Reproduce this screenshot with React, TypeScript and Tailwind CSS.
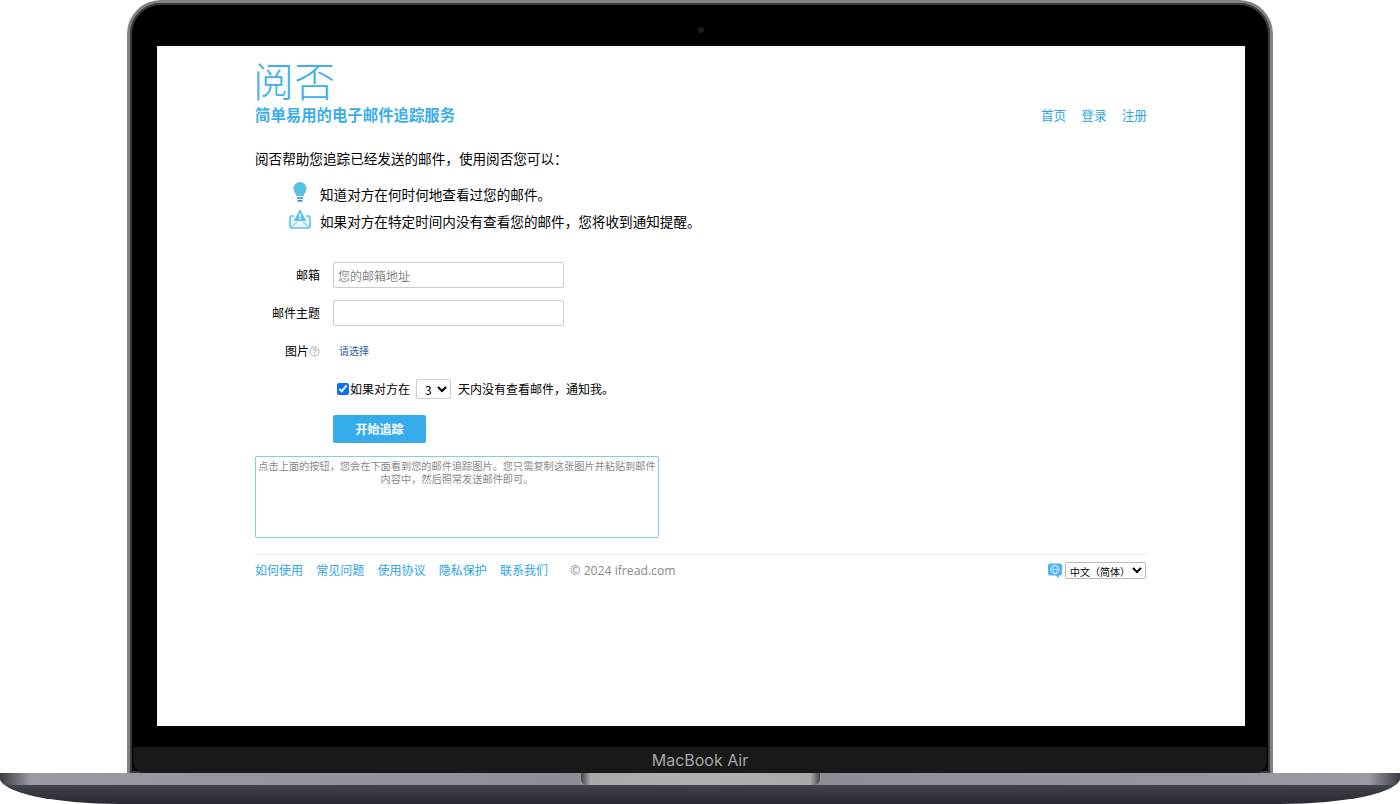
import React from 'react';

const BulbIcon = () => (
  <svg width="16" height="23" viewBox="0 0 16 22">
    <path d="M8 0.5a6.6 6.6 0 0 0-6.6 6.7c0 3 2.2 4.4 3.2 7.3h6.8c1-2.9 3.2-4.3 3.2-7.3A6.6 6.6 0 0 0 8 0.5z" fill="#5bc0e8" />
    <rect x="5" y="15.6" width="6" height="1.8" fill="#3aa5dc" />
    <rect x="5.6" y="18.4" width="4.8" height="1.8" fill="#2b8fd0" />
  </svg>
);

const MailAlertIcon = () => (
  <svg width="22" height="20" viewBox="0 0 22 20">
    <path d="M5 7H2.6A1.6 1.6 0 0 0 1 8.6v8.8A1.6 1.6 0 0 0 2.6 19h16.8a1.6 1.6 0 0 0 1.6-1.6V8.6A1.6 1.6 0 0 0 19.4 7H17" fill="#e8f6fd" stroke="#5bc0e8" strokeWidth="1.6" />
    <path d="M2 18l6-5M20 18l-6-5" stroke="#8fd6f2" strokeWidth="1.2" fill="none" />
    <path d="M11 1l5.5 10.5h-11z" fill="#5bc0e8" stroke="#5bc0e8" strokeLinejoin="round" />
    <rect x="10.2" y="4.6" width="1.6" height="3.6" fill="#fff" />
    <rect x="10.2" y="9" width="1.6" height="1.5" fill="#fff" />
  </svg>
);

const HelpIcon = () => (
  <svg width="11" height="11" viewBox="0 0 11 11">
    <circle cx="5.5" cy="5.5" r="4.7" fill="#f4f4f4" stroke="#b5b5b5" />
    <path d="M4 4.3c0-2 3.1-1.9 3.1-.1 0 1.2-1.6 1.2-1.6 2.5M5.5 7.6v1" fill="none" stroke="#a0a0a0" />
  </svg>
);

const LangIcon = () => (
  <svg width="16" height="17" viewBox="0 0 16 16">
    <path d="M3 1h10a2 2 0 0 1 2 2v8a2 2 0 0 1-2 2h-1l-.5 3-2.5-3H3a2 2 0 0 1-2-2V3a2 2 0 0 1 2-2z" fill="#4fb4f0" />
    <circle cx="8" cy="7" r="4.2" fill="none" stroke="#d5eefc" strokeWidth="0.9" />
    <ellipse cx="8" cy="7" rx="1.9" ry="4.2" fill="none" stroke="#d5eefc" strokeWidth="0.7" />
    <path d="M3.8 7h8.4" stroke="#d5eefc" strokeWidth="0.7" />
  </svg>
);

const footerLinks = ['如何使用', '常见问题', '使用协议', '隐私保护', '联系我们'];

const IfreadPage = () => (
  <div className="mx-auto w-[892px] text-black font-['Noto_Sans_CJK_SC',sans-serif]">
    <div className="flex items-end justify-between h-[79px]">
      <div>
        <div className="text-[41px] leading-[42px] mb-[3px] -ml-[2px] font-extralight text-[#3fb0ea]">阅否</div>
        <div className="text-[15.4px] leading-[22px] font-bold text-[#3aaeea]">简单易用的电子邮件追踪服务</div>
      </div>
      <div className="flex gap-[15px] -mb-px text-[12.7px] leading-[22px] text-[#2ca5e6]">
        <span>首页</span>
        <span>登录</span>
        <span>注册</span>
      </div>
    </div>

    <p className="text-[13.6px] leading-5 mt-[23px]">阅否帮助您追踪已经发送的邮件，使用阅否您可以：</p>

    <div className="mt-[15px] ml-[34px] flex flex-col gap-[5px] text-[13.6px]">
      <div className="flex items-center h-[22px]">
        <div className="w-[31px] pl-[3px] -mt-[4px]"><BulbIcon /></div>
        <span>知道对方在何时何地查看过您的邮件。</span>
      </div>
      <div className="flex items-center h-[22px]">
        <div className="w-[31px] -mt-[4px]"><MailAlertIcon /></div>
        <span>如果对方在特定时间内没有查看您的邮件，您将收到通知提醒。</span>
      </div>
    </div>

    <div className="mt-[30px] flex flex-col text-xs">
      <div className="flex items-center gap-[13px]">
        <label className="w-[65px] text-right">邮箱</label>
        <input
          placeholder="您的邮箱地址"
          className="w-[231px] h-[26px] border border-[#ccc] rounded-[2px] px-1 text-xs placeholder:text-[#888] outline-none"
        />
      </div>
      <div className="flex items-center gap-[13px] mt-3">
        <label className="w-[65px] text-right">邮件主题</label>
        <input className="w-[231px] h-[26px] border border-[#ccc] rounded-[2px] px-1 text-xs outline-none" />
      </div>
      <div className="flex items-center mt-[15px] h-[20px]">
        <div className="w-[65px] flex justify-end items-center">
          <span>图片</span>
          <HelpIcon />
        </div>
        <span className="ml-[19px] text-[10px] text-[#1f5c9e]">请选择</span>
      </div>
      <div className="flex items-center mt-[18px] ml-[81px] h-[20px]">
        <input type="checkbox" defaultChecked className="w-3 h-3 ml-px accent-[#0b6ffb]" />
        <span className="ml-px">如果对方在</span>
        <select className="ml-[6px] w-[35px] h-[20px] border border-[#ccc] rounded-[2px] pl-[4px] text-xs bg-white">
          <option>3</option>
        </select>
        <span className="ml-[7px]">天内没有查看邮件，通知我。</span>
      </div>
      <button className="mt-[16px] ml-[78px] w-[93px] h-[28px] rounded-[2px] bg-[#36aceb] text-white font-bold text-xs">
        开始追踪
      </button>
    </div>

    <div className="mt-[13px] w-[404px] h-[82px] border border-[#7fcdf6] rounded-[2px] px-[2px] pt-[2px] text-center text-[10.2px] leading-[13px] text-[#888]">
      点击上面的按钮，您会在下面看到您的邮件追踪图片。您只需复制这张图片并粘贴到邮件内容中，然后照常发送邮件即可。
    </div>

    <div className="mt-4 border-t border-[#eee] flex items-center justify-between pt-[7px] text-xs">
      <div className="flex items-baseline gap-[13.25px] text-[#2ca5e6]">
        {footerLinks.map((t) => (
          <span key={t}>{t}</span>
        ))}
        <span className="ml-[9px] text-[#888] font-['Open_Sans',sans-serif] text-[12.2px]">© 2024 ifread.com</span>
      </div>
      <div className="flex items-center gap-[2px] mr-px">
        <LangIcon />
        <select className="w-[81px] h-[17px] border border-[#bbb] rounded-[2px] text-[10px] bg-white">
          <option>中文（简体）</option>
        </select>
      </div>
    </div>
  </div>
);

export default function App() {
  return (
    <div className="w-[1400px] h-[804px] bg-white overflow-hidden flex flex-col">
      {/* lid */}
      <div className="relative mx-[127px] h-[773px] shrink-0 rounded-t-[34px] border-x-[3px] border-t-[3px] border-[#808085] bg-black shadow-[inset_0_0_0_2px_#3a3a3d] flex flex-col items-center">
        <div className="absolute top-[24px] left-1/2 -ml-[2px] w-[6px] h-[6px] rounded-full bg-[#1c2026]" />
        <div className="mt-[43px] ml-[2px] w-[1088px] h-[680px] shrink-0 bg-white overflow-hidden">
          <IfreadPage />
        </div>
        <div className="mt-[21px] w-[1134px] flex-1 bg-[#191919] rounded-b-[12px] flex items-center justify-center">
          <span className="text-[#a6a6a6] text-[16px] font-['Inter',sans-serif]">MacBook Air</span>
        </div>
      </div>
      {/* base */}
      <div className="relative flex-1 rounded-b-[120px_26px] overflow-hidden bg-gradient-to-b from-[#55565c] to-[#272a33]">
        <div className="h-[12px] bg-[linear-gradient(90deg,#3c3d42_0%,#9a9ba0_2.2%,#8b8c91_50%,#9a9ba0_97.8%,#3c3d42_100%)]" />
        <div className="absolute top-0 left-[581px] w-[239px] h-[12px] rounded-b-[6px] bg-[linear-gradient(90deg,#47474b_0%,#a9a9ac_4%,#b0b0b2_50%,#a9a9ac_96%,#47474b_100%)]" />
      </div>
    </div>
  );
}
